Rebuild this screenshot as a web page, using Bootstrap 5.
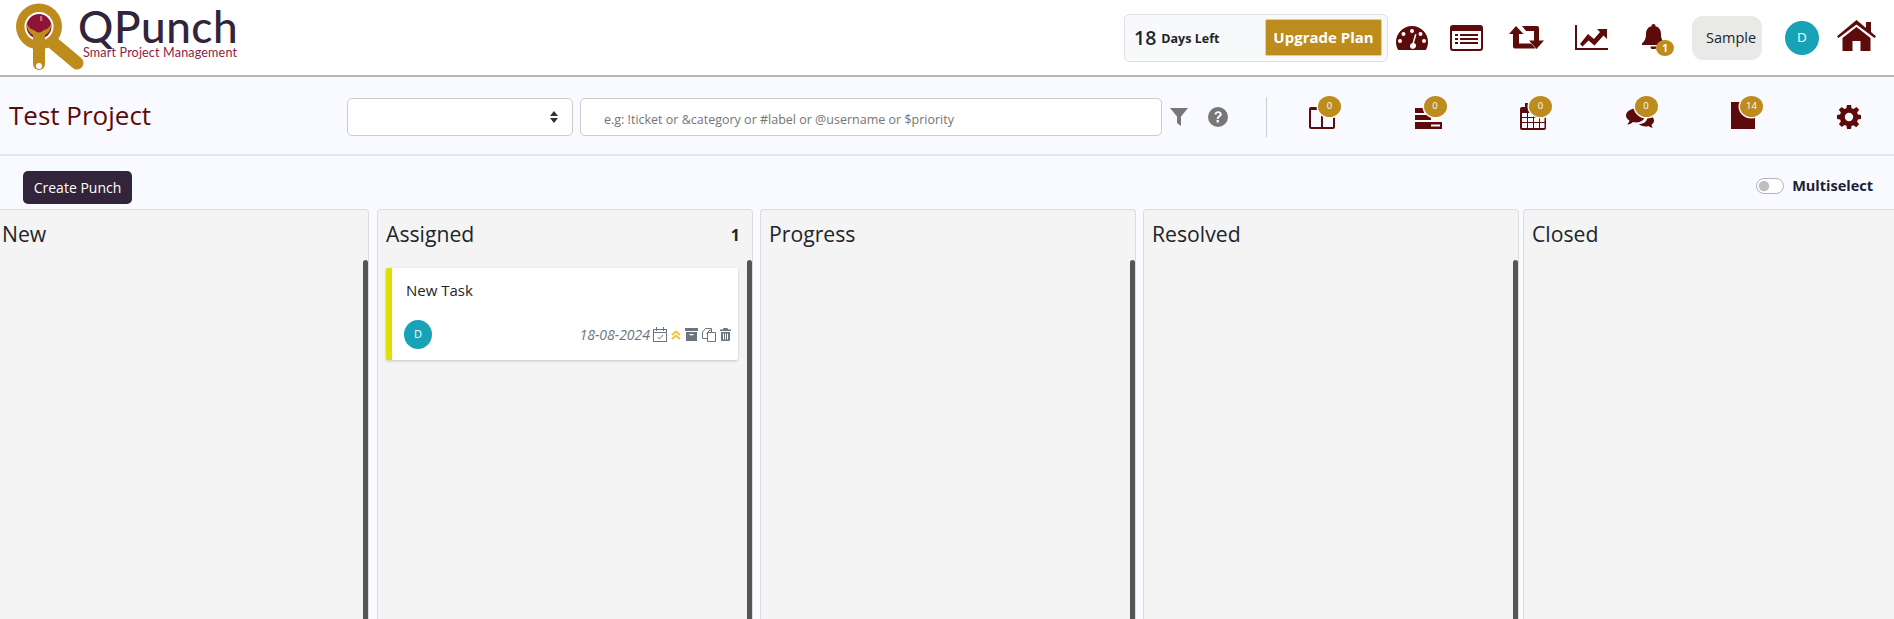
<!DOCTYPE html>
<html lang="en"><head><meta charset="utf-8"><title>QPunch</title>
<link href="https://cdn.jsdelivr.net/npm/bootstrap@5.3.0/dist/css/bootstrap.min.css" rel="stylesheet">
<style>
html,body{height:619px;overflow:hidden}
body{font-family:"Open Sans","Noto Sans",sans-serif;background:#f9faff;color:#212529;font-size:14px}
.top-bar{height:77px;background:#fff;border-bottom:2px solid #b5b5b5;padding-left:16px;padding-right:18px}
.logo-mark{width:68px;height:72px;flex:none;margin-top:0}
.logo-words{margin-left:-4px;margin-top:-10px;line-height:1}
.logo-name{font-family:"Lato",sans-serif;font-size:44px;color:#32243a;letter-spacing:.6px;line-height:40px;font-weight:500;margin-left:-2px}
.logo-tag{font-family:"Lato",sans-serif;font-size:12.6px;color:#8e1c45;margin-left:3px;line-height:14px;letter-spacing:.15px}
.days-box{width:264px;height:48px;background:#f8f9fa;border:1px solid #dee2e6;border-radius:5px;padding:0 5px 0 9px;margin-right:8px}
.days-num{font-size:19.5px;font-weight:600;color:#212529}
.days-txt{font-size:12.5px;font-weight:700;margin-left:5px;margin-top:3px}
.upgrade-btn{background:#bd8c1d;color:#fff;font-weight:700;font-size:15px;width:117px;height:37px;border:1px solid #d5cdb8;border-radius:2px;padding:0;white-space:nowrap}
.top-ico{fill:#5c0a0a;display:block;flex:none}
.sample-pill{width:70px;height:44px;background:#e9e9e7;border-radius:11px;font-size:14.5px;padding-left:14px;line-height:44px;white-space:nowrap;overflow:hidden}
.round-av{background:#17a2b8;color:#fff;border-radius:50%;flex:none;display:flex;align-items:center;justify-content:center}
.av-lg{width:34px;height:34px;font-size:13.5px}
.av-sm{width:28px;height:29px;font-size:11px}
.bell-wrap{width:31px;height:33px;position:relative;margin-top:6px}
.gold-count{position:absolute;background:#bd8c1d;color:#fff;display:flex;align-items:center;justify-content:center;border-radius:50%}
.bell-wrap .gold-count{left:14px;top:16px;width:18px;height:16px;font-size:10px;font-weight:700}
.sub-bar{height:79px;border-bottom:2px solid #e4e6eb;padding-left:9px;padding-top:2px}
.proj-title{width:338px;font-size:26px;color:#5c0a0a;font-weight:500;margin:0;line-height:1.2;flex:none;padding-bottom:2px}
.proj-select{width:226px;height:38px;flex:none;margin-right:7px;border-radius:5px;border-color:#ccc;background-image:url("data:image/svg+xml,%3Csvg xmlns='http://www.w3.org/2000/svg' viewBox='0 0 8 12'%3E%3Cpath fill='%23333' d='M4 0 8 5H0ZM4 12 0 7H8Z'/%3E%3C/svg%3E");background-size:8px 12px;background-position:right 14px center}
.proj-search{width:582px;height:38px;flex:none;border-radius:5px;border-color:#ccc;padding:8px 12px 2px 23px;font-size:12.5px}
.proj-search::placeholder{color:#757575}
.tool-div{width:1px;height:40px;background:#ccc;flex:none;margin-left:38px;margin-right:42px}
.sub-tools{gap:79.5px}
.sub-tool{width:26px;height:24px;position:relative;flex:none;margin-top:1px}
.sub-tool .gold-count{left:9px;top:-9px;width:23px;height:21px;font-size:9.5px;box-shadow:0 0 0 1.5px #f9faff;font-weight:500}
.action-row{height:53px;padding:15px 21px 0 23px}
.punch-btn{background:#32243a;color:#fff;font-size:14px;width:109px;height:33px;padding:0;border:0;border-radius:5px;white-space:nowrap}
.punch-btn:hover{background:#32243a;color:#fff}
.multi-wrap{min-height:0;margin:0;padding:0;gap:8px;margin-top:-4px}
.multi-wrap .form-check-input{float:none;margin:0;width:28px;height:16px;background-color:#fff;border-color:#adb5bd}
.multi-wrap label{font-weight:700;font-size:14.5px;color:#1b2238}
.kanban{height:410px;margin-left:-7px;width:1930px;gap:7px}
.lane{width:376px;flex:none;background:#f4f4f4;border:1px solid #dcdcdc;border-bottom:0;border-radius:4px 4px 0 0;position:relative;padding:0 8px}
.lane-second{margin-left:1px}
.lane-last{margin-left:-3px}
.lane-head{height:42px;margin-top:12px;font-size:21.2px;line-height:24px}
.lane-count{font-size:16px;font-weight:700;margin-right:4px;margin-top:1px}
.lane-bar{position:absolute;right:0;top:50px;width:5px;bottom:0;background:#555;border-radius:3px 3px 0 0}
.task-tile{width:352px;height:92px;margin-top:4px;background:#fff;border:0;border-left:6px solid #dde000;border-radius:2px;box-shadow:0 1px 3px rgba(0,0,0,.2);padding:10px 7px 11px 12px}
.task-name{font-size:15px;line-height:24px;padding-left:2px;color:#212529}
.task-date{font-style:italic;font-size:14px;color:#6c757d;margin-right:3px}
.task-ico{flex:none;display:block}
.gap-a{margin-left:4px}
</style></head><body>
<header class="top-bar d-flex align-items-center">
  <svg class="logo-mark" viewBox="0 0 68 72" aria-label="logo">
    <path d="M23 42 L23 62" stroke="#bd8c1d" stroke-width="12" stroke-linecap="round" fill="none"/>
    <path d="M36 40 L61 61" stroke="#bd8c1d" stroke-width="13" stroke-linecap="round" fill="none"/>
    <circle cx="23" cy="64" r="3" fill="#fff"/>
    <circle cx="23" cy="24.500" r="23" fill="#bd8c1d"/>
    <circle cx="23" cy="24.500" r="14.500" fill="#fff"/>
    <circle cx="23" cy="24.500" r="12.500" fill="#8e1337"/>
    <path d="M10.500 21Q11 30 17 33V42H29V33Q35 30 35.500 21Q33 27 28 28Q23 33 18 28Q13 27 10.500 21Z" fill="#bd8c1d"/>
    <path d="M24 14h2l.5 5h-2.500Z" fill="#c9627e"/>
  </svg>
  <div class="logo-words"><div class="logo-name">QPunch</div><div class="logo-tag">Smart Project Management</div></div>
  <div class="ms-auto d-flex align-items-center">
    <div class="days-box d-flex align-items-center"><span class="days-num">18</span><span class="days-txt">Days Left</span><button class="btn upgrade-btn ms-auto" type="button">Upgrade Plan</button></div>
    <svg class="top-ico" width="32" height="24" viewBox="0 0 32 24"><path fill-rule="evenodd" d="M16 0A16 16 0 0 0 0 16c0 3 .8 5.600 2.200 8H29.800C31.200 21.600 32 19 32 16A16 16 0 0 0 16 0ZM16 3a2 2 0 1 1 0 4 2 2 0 0 1 0-4ZM7.500 6a2 2 0 1 1 0 4 2 2 0 0 1 0-4ZM24.500 6a2 2 0 1 1 0 4 2 2 0 0 1 0-4ZM4 13a2 2 0 1 1 0 4 2 2 0 0 1 0-4ZM28 13a2 2 0 1 1 0 4 2 2 0 0 1 0-4ZM19 8l1.500.5L18 17a3 3 0 1 1-4 2.900 3 3 0 0 1 2.500-3Z"/></svg>
    <svg class="top-ico" style="margin-left:22px" width="33" height="26" viewBox="0 0 33 26"><path fill-rule="evenodd" d="M3 0H30a3 3 0 0 1 3 3V23a3 3 0 0 1-3 3H3a3 3 0 0 1-3-3V3a3 3 0 0 1 3-3ZM2 6V23a1 1 0 0 0 1 1H30a1 1 0 0 0 1-1V6ZM5 9h3v2H5ZM10 9H28v2H10ZM5 13h3v2H5ZM10 13H28v2H10ZM5 17h3v2H5ZM10 17H28v2H10Z"/></svg>
    <svg class="top-ico" style="margin-left:26px" width="36" height="23" viewBox="0 0 36 23"><path d="M7 0 14.500 8H10V17.500H22L26.500 22.500H6a2 2 0 0 1-2-2V8H0Z"/><path d="M27.500 23 20 14.500H25V5H17L13 0H28a2 2 0 0 1 2 2V14.500H35Z"/></svg>
    <svg class="top-ico" style="margin-left:30px" width="33" height="25" viewBox="0 0 33 25"><path d="M0 0H2V23H33V25H0Z"/><path d="M5 19 13 9 19 14 25 7 22 4H32V14L28.500 10.500 19.500 20.500 13.500 15.500 7.500 21.500Z"/></svg>
    <div class="bell-wrap" style="margin-left:34px"><svg class="top-ico" width="23" height="25" viewBox="0 0 23 25"><path d="M11.500 0a2 2 0 0 1 2 2.200C17.500 3 19 6.500 19 10c0 5 1.500 7 4 9.500V21H0v-1.500C2.500 17 4 15 4 10c0-3.500 1.500-7 5.500-7.800A2 2 0 0 1 11.500 0ZM8.500 22.500h6a3 3 0 0 1-6 0Z"/></svg><span class="gold-count">1</span></div>
    <div class="sample-pill" style="margin-left:19px">Sample</div>
    <div class="round-av av-lg" style="margin-left:23px">D</div>
    <svg class="top-ico" style="margin-left:18px;margin-top:-4px" width="39" height="31" viewBox="0 0 39 31"><path d="M19.500 0 29 8V2h5V12l5 4.200L37.500 18 19.500 4.500 1.500 18 0 16.200Z"/><path d="M19.500 7 33.500 18V31H23.500V21H15.500V31H5.500V18Z"/></svg>
  </div>
</header>
<section class="sub-bar d-flex align-items-center">
  <h1 class="proj-title">Test Project</h1>
  <select class="form-select proj-select" aria-label="select"><option></option></select>
  <input class="form-control proj-search" type="text" placeholder="e.g: !ticket or &amp;category or #label or @username or $priority">
  <svg style="margin-left:8px;flex:none" width="18" height="18" viewBox="0 0 18 18" fill="#777"><path d="M0 0H18L11 8.500V18L7 15V8.500Z"/></svg>
  <svg style="margin-left:20px;flex:none" width="20" height="20" viewBox="0 0 20 20"><circle cx="10" cy="10" r="10" fill="#777"/><path d="M6.500 7.500C6.800 5.300 8.300 4.300 10.200 4.300c2 0 3.600 1.200 3.600 3 0 2.700-3 2.500-3 4.700H8.700c0-3 2.800-3.100 2.800-4.700 0-.8-.6-1.200-1.400-1.200-.8 0-1.300.5-1.600 1.400ZM8.600 13h2.300v2.400H8.600Z" fill="#f9faff"/></svg>
  <div class="tool-div"></div>
  <div class="d-flex sub-tools">
    <div class="sub-tool"><svg class="top-ico" width="26" height="24" viewBox="0 0 26 24"><path fill-rule="evenodd" d="M3 2H24a2 2 0 0 1 2 2V22a2 2 0 0 1-2 2H2a2 2 0 0 1-2-2V4a2 2 0 0 1 2-2ZM2 5V22H12V5ZM14 5V22H24V5Z"/></svg><span class="gold-count">0</span></div>
    <div class="sub-tool"><svg class="top-ico" width="27" height="24" viewBox="0 0 27 24"><path fill-rule="evenodd" d="M0 3H9V8H0ZM0 10H16V15H0ZM0 17H27V24H0ZM16 19.500V21.500H25V19.500Z"/></svg><span class="gold-count">0</span></div>
    <div class="sub-tool"><svg class="top-ico" width="26" height="27" viewBox="0 0 26 27" style="margin-top:-2px"><path fill-rule="evenodd" d="M5 0h3v4H24a2 2 0 0 1 2 2V25a2 2 0 0 1-2 2H2a2 2 0 0 1-2-2V6a2 2 0 0 1 2-2H5ZM2 10V14H7V10ZM8 10V14H13V10ZM14 10V14H19V10ZM20 10V14H24.500V10ZM2 15V19H7V15ZM8 15V19H13V15ZM14 15V19H19V15ZM20 15V19H24.500V15ZM2 20V25H7V20ZM8 20V25H13V20ZM14 20V25H19V20ZM20 20V25H24.500V20Z"/></svg><span class="gold-count">0</span></div>
    <div class="sub-tool"><svg class="top-ico" width="28" height="23" viewBox="0 0 28 22"><path d="M10 3C15 3 19 6 19 10s-4 7-9 7c-1 0-2 0-3-.4C5 18.500 3 19 1 19c1.500-1.200 2.200-2.700 2.400-4C1.300 13.700 0 12 0 10 0 6 5 3 10 3Z"/><path d="M21 8.500C25 9.500 28 12 28 15c0 1.800-1 3.300-2.600 4.400.2 1 .8 2 1.800 2.600-2 0-3.500-.6-4.700-1.600-1.500.5-3 .6-4.500.4-2-.2-4-1-5-2.300C18 19 23 15 21 8.500Z"/></svg><span class="gold-count">0</span></div>
    <div class="sub-tool"><svg class="top-ico" width="24" height="27" viewBox="0 0 24 27" style="margin-top:-3px"><path d="M0 0H20a3 3 0 0 1 4 3V27H0Z"/></svg><span class="gold-count">14</span></div>
    <div class="sub-tool"><svg class="top-ico" width="24" height="24" viewBox="0 0 24 24"><path fill-rule="evenodd" d="M10 0h4l.6 3.300 2 .8L19.400 2l2.800 2.800-2.100 2.800.8 2 3.100.4v4l-3.100.6-.8 2 2 2.700-2.900 2.900-2.700-2-2 .8L14 24h-4l-.5-3.200-2-.8-2.700 2-2.900-2.900 2-2.700-.8-2L0 14v-4l3.100-.4.800-2-2.100-2.800L4.600 2l2.800 2.100 2-.8ZM12 7.800a4.200 4.200 0 1 0 0 8.400 4.200 4.200 0 0 0 0-8.400Z"/></svg></div>
  </div>
</section>
<div class="action-row d-flex justify-content-between align-items-start">
  <button class="btn punch-btn" type="button">Create Punch</button>
  <div class="form-check form-switch multi-wrap d-flex align-items-center mt-1"><input class="form-check-input" type="checkbox" role="switch" id="ms"><label for="ms">Multiselect</label></div>
</div>
<main class="kanban d-flex">
  <div class="lane"><div class="lane-head d-flex justify-content-between"><span>New</span></div><div class="lane-bar"></div></div>
  <div class="lane lane-second"><div class="lane-head d-flex justify-content-between"><span>Assigned</span><span class="lane-count">1</span></div><div class="lane-bar"></div>
    <div class="task-tile d-flex flex-column">
      <div class="task-name">New Task</div>
      <div class="d-flex align-items-center mt-auto">
        <div class="round-av av-sm">D</div>
        <div class="ms-auto d-flex align-items-center">
          <span class="task-date">18-08-2024</span>
          <svg class="task-ico" width="14" height="15" viewBox="0 0 14 15" fill="none" stroke="#6c757d"><rect x=".5" y="2.500" width="13" height="12"/><path d="M.5 5.500h13M3.500 0v4M10.500 0v4M4.500 10l2 2 3.500-4"/></svg>
          <svg class="task-ico gap-a" width="10" height="10" viewBox="0 0 10 10" fill="none" stroke="#f4c430" stroke-width="1.800"><path d="M1 5 5 1.500 9 5M1 9 5 5.500 9 9"/></svg>
          <svg class="task-ico gap-a" width="13" height="13" viewBox="0 0 13 13" fill="#6c757d"><path d="M0 0H13V3H0ZM1 4H12V13H1ZM4.500 6V7.200H8.500V6Z" fill-rule="evenodd"/></svg>
          <svg class="task-ico gap-a" width="14" height="14" viewBox="0 0 14 14" fill="none" stroke="#6c757d"><path d="M4.500 5.500 8 2H9.500V5M.5 9V4L3.500 .5H9.500V2"/><path d="M5.500 4.500H13.500V13.500H5.500ZM.5 9V10.500H5.500"/></svg>
          <svg class="task-ico gap-a" width="11" height="13" viewBox="0 0 11 13" fill="#6c757d"><path fill-rule="evenodd" d="M3.500 0h4L8 1.500h3V3H0V1.500h3ZM1 4h9v8a1 1 0 0 1-1 1H2a1 1 0 0 1-1-1ZM3 5.500V11.500H4V5.500ZM5 5.500V11.500H6V5.500ZM7 5.500V11.500H8V5.500Z"/></svg>
        </div>
      </div>
    </div>
  </div>
  <div class="lane"><div class="lane-head"><span>Progress</span></div><div class="lane-bar"></div></div>
  <div class="lane"><div class="lane-head"><span>Resolved</span></div><div class="lane-bar"></div></div>
  <div class="lane lane-last"><div class="lane-head"><span>Closed</span></div></div>
</main>
<script src="https://cdn.jsdelivr.net/npm/bootstrap@5.3.0/dist/js/bootstrap.bundle.min.js"></script>
</body></html>
